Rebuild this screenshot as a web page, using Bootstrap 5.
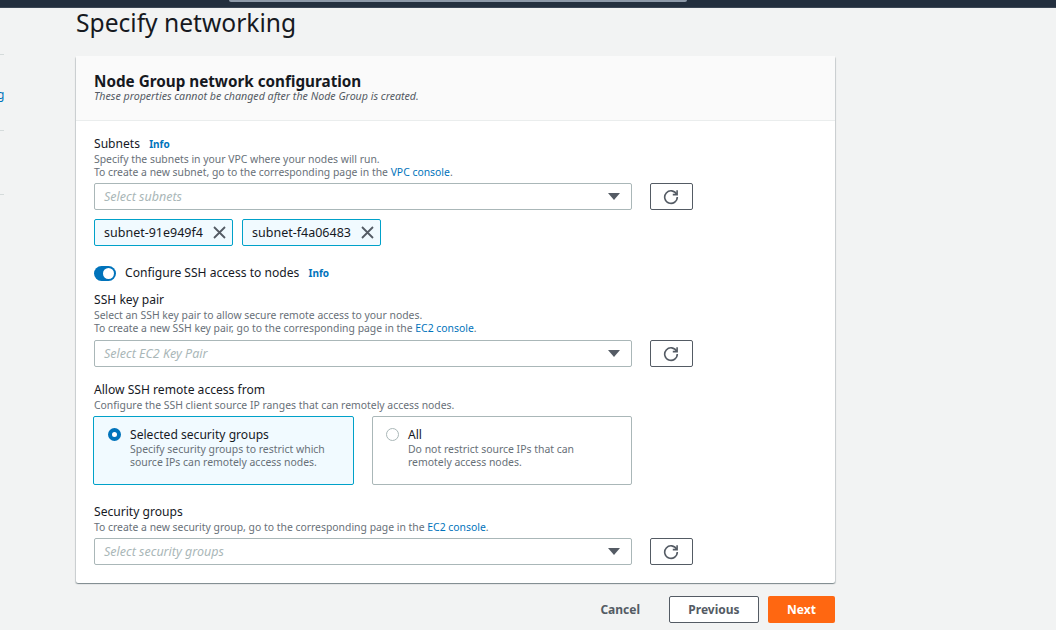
<!DOCTYPE html>
<html lang="en">
<head>
<meta charset="utf-8">
<title>Specify networking</title>
<link href="https://cdn.jsdelivr.net/npm/bootstrap@5.3.0/dist/css/bootstrap.min.css" rel="stylesheet">
<style>
html,body{height:630px;overflow:hidden}
body{background:#f2f3f3;font-family:"Noto Sans","Open Sans",sans-serif;color:#16191f;font-size:12.5px}
.topbar{height:8px;background:#232f3e;border-bottom:1px solid #3b4654}
.searchline{width:458px;height:2px;margin-left:229px;background:#8d99a8;border-radius:0 0 2px 2px}
.shell{height:622px}
.sidenav{width:76px;flex:none}
.sidetick{width:4px;height:1px;background:#d5dbdb}
.sideletter{width:4px;height:14px;overflow:hidden;color:#0073bb;font-size:12px;line-height:14px;text-indent:-10.5px;white-space:nowrap}
.pagehead{font-size:24.6px;line-height:30px;font-weight:400;margin:0;height:48px}
.mainarea{width:759px;flex:none}
.panel{border:0;border-radius:2px;box-shadow:0 1px 1px rgba(0,28,36,.3),1px 1px 1px rgba(0,28,36,.15),-1px 1px 1px rgba(0,28,36,.15);background:#fff;height:527px}
.panelhead{background:#fafafa;border-bottom:1px solid #eaeded;height:65px;padding:17px 18px 0}
.paneltitle{font-size:15.25px;line-height:16px;font-weight:700;margin:0}
.panelsub{font-size:10.65px;line-height:12px;font-style:italic;color:#545b64;margin-top:1px}
.panelbody{padding:14px 18px 0}
.fieldlabel{font-size:12.1px;line-height:17px;color:#16191f}
.infolink{font-size:10px;font-weight:700;color:#0073bb;text-decoration:none;margin-left:6px}
.fielddesc{font-size:10.4px;line-height:13px;color:#687078}
.fielddesc a{color:#0073bb;text-decoration:none}
.desc-low{margin-top:1px}
.selrow{gap:18px;height:27px;margin-top:4px}
.selrow-low{margin-top:5px}
.selbox{width:538px;height:27px;border:1px solid #aab7b8;border-radius:2px;padding:0 9px;background:#fff}
.selhint{font-style:italic;color:#aab7b8;font-size:12.5px;padding-top:2px}
.caret{width:0;height:0;border-left:6px solid transparent;border-right:6px solid transparent;border-top:7px solid #545b64;margin-right:2px}
.refbtn{width:43px;height:27px;border:1px solid #545b64;border-radius:2px;background:#fff;padding:0 1px 0 0}
.tokenrow{gap:9px;margin-top:9px;height:27px}
.tokenitem{height:27px;width:139px;border:1px solid #00a1c9;border-radius:2px;background:#f1faff;padding:0 6px 0 9px;font-size:12.5px;color:#16191f}
.tokenname{padding-top:1px}
.togglerow{margin-top:18px;height:18px;gap:9px}
.togglepill{width:22px;height:15px;border-radius:8px;background:#0073bb;padding:2px 2px 2px 9px;flex:none}
.toggleknob{width:11px;height:11px;border-radius:50%;background:#fff}
.tilerow{gap:18px;margin-top:4px;height:69px;margin-left:-1px}
.tile{width:261px;height:69px;border:1px solid #aab7b8;border-radius:2px;padding:9px 13px 9px 14px;gap:9px;background:#fff}
.tile-on{background:#f1faff;border-color:#00a1c9;width:261px}
.tile-off{width:260px;padding-left:13px}
.radiomark{width:13px;height:13px;border-radius:50%;flex:none;margin-top:2px;background:#fff}
.radio-on{border:4px solid #0073bb}
.radio-off{border:1px solid #aab7b8}
.tiletitle{font-size:12.1px;line-height:17px}
.tiledesc{font-size:10.45px;line-height:13px;color:#687078}
.footrow{height:27px;margin-top:13px}
.btncancel{font-size:12px;font-weight:700;color:#545b64;margin-right:29px;padding:0;border:0;background:none}
.btnprev{width:90px;height:27px;border:1px solid #545b64;border-radius:2px;background:#fff;color:#545b64;font-size:12px;font-weight:700;padding:0;margin-right:9px}
.btnnext{width:67px;height:27px;border:0;border-radius:2px;background:#ff6711;color:#fff;font-size:12px;font-weight:700;padding:0}
</style>
</head>
<body>
<div class="topbar"><div class="searchline"></div></div>
<div class="d-flex shell">
  <nav class="sidenav">
    <div class="sidetick" style="margin-top:46px"></div>
    <div class="sideletter" style="margin-top:33px">ng</div>
    <div class="sidetick" style="margin-top:28px"></div>
    <div class="sidetick" style="margin-top:63px"></div>
  </nav>
  <main class="mainarea">
    <h1 class="pagehead">Specify networking</h1>
    <section class="card panel">
      <header class="panelhead">
        <h2 class="paneltitle">Node Group network configuration</h2>
        <div class="panelsub">These properties cannot be changed after the Node Group is created.</div>
      </header>
      <div class="panelbody">
        <div class="fieldlabel">Subnets <a class="infolink" href="#">Info</a></div>
        <div class="fielddesc">Specify the subnets in your VPC where your nodes will run.<br>To create a new subnet, go to the corresponding page in the <a href="#">VPC console</a>.</div>
        <div class="d-flex selrow">
          <div class="selbox d-flex align-items-center justify-content-between"><span class="selhint">Select subnets</span><span class="caret"></span></div>
          <button class="refbtn d-flex align-items-center justify-content-center" type="button" aria-label="Refresh"><svg width="16" height="16" viewBox="0 0 16 16" fill="none" stroke="#545b64" stroke-width="1.6"><path d="M13.6 5.2A6.3 6.3 0 1 0 14.3 8"/><path d="M9.8 5.6h4.3V1.2"/></svg></button>
        </div>
        <div class="d-flex tokenrow">
          <div class="tokenitem d-flex align-items-center justify-content-between"><span class="tokenname">subnet-91e949f4</span><svg width="13" height="13" viewBox="0 0 13 13" stroke="#545b64" stroke-width="1.8"><path d="M1 1l11 11M12 1L1 12"/></svg></div>
          <div class="tokenitem d-flex align-items-center justify-content-between"><span class="tokenname">subnet-f4a06483</span><svg width="13" height="13" viewBox="0 0 13 13" stroke="#545b64" stroke-width="1.8"><path d="M1 1l11 11M12 1L1 12"/></svg></div>
        </div>
        <div class="d-flex align-items-center togglerow">
          <div class="togglepill"><div class="toggleknob"></div></div>
          <div class="fieldlabel">Configure SSH access to nodes <a class="infolink" href="#">Info</a></div>
        </div>
        <div class="fieldlabel" style="margin-top:9px">SSH key pair</div>
        <div class="fielddesc desc-low">Select an SSH key pair to allow secure remote access to your nodes.<br>To create a new SSH key pair, go to the corresponding page in the <a href="#">EC2 console</a>.</div>
        <div class="d-flex selrow selrow-low">
          <div class="selbox d-flex align-items-center justify-content-between"><span class="selhint">Select EC2 Key Pair</span><span class="caret"></span></div>
          <button class="refbtn d-flex align-items-center justify-content-center" type="button" aria-label="Refresh"><svg width="16" height="16" viewBox="0 0 16 16" fill="none" stroke="#545b64" stroke-width="1.6"><path d="M13.6 5.2A6.3 6.3 0 1 0 14.3 8"/><path d="M9.8 5.6h4.3V1.2"/></svg></button>
        </div>
        <div class="fieldlabel" style="margin-top:14px">Allow SSH remote access from</div>
        <div class="fielddesc desc-low">Configure the SSH client source IP ranges that can remotely access nodes.</div>
        <div class="d-flex tilerow">
          <div class="tile tile-on d-flex"><span class="radiomark radio-on"></span><div><div class="tiletitle">Selected security groups</div><div class="tiledesc">Specify security groups to restrict which<br>source IPs can remotely access nodes.</div></div></div>
          <div class="tile tile-off d-flex"><span class="radiomark radio-off"></span><div><div class="tiletitle">All</div><div class="tiledesc">Do not restrict source IPs that can<br>remotely access nodes.</div></div></div>
        </div>
        <div class="fieldlabel" style="margin-top:18px">Security groups</div>
        <div class="fielddesc desc-low">To create a new security group, go to the corresponding page in the <a href="#">EC2 console</a>.</div>
        <div class="d-flex selrow">
          <div class="selbox d-flex align-items-center justify-content-between"><span class="selhint">Select security groups</span><span class="caret"></span></div>
          <button class="refbtn d-flex align-items-center justify-content-center" type="button" aria-label="Refresh"><svg width="16" height="16" viewBox="0 0 16 16" fill="none" stroke="#545b64" stroke-width="1.6"><path d="M13.6 5.2A6.3 6.3 0 1 0 14.3 8"/><path d="M9.8 5.6h4.3V1.2"/></svg></button>
        </div>
      </div>
    </section>
    <div class="d-flex justify-content-end align-items-center footrow">
      <button class="btncancel" type="button">Cancel</button>
      <button class="btnprev" type="button">Previous</button>
      <button class="btnnext" type="button">Next</button>
    </div>
  </main>
</div>
</body>
</html>
